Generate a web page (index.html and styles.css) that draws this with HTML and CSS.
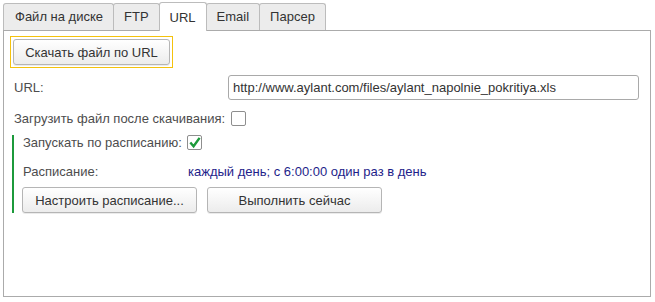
FILE: index.html
```html
<!DOCTYPE html>
<html lang="ru">
<head>
  <meta charset="UTF-8">
  <title>Загрузка файла</title>
  <link rel="stylesheet" href="styles.css">
</head>
<body>
  <div class="form">
    <div class="tabs">
      <div class="tab">Файл на диске</div>
      <div class="tab">FTP</div>
      <div class="tab active">URL</div>
      <div class="tab">Email</div>
      <div class="tab">Парсер</div>
    </div>

    <div class="panel">
      <div class="focus-frame">
        <button class="btn btn-download">Скачать файл по URL</button>
      </div>

      <div class="row row-url">
        <span class="label">URL:</span>
        <input class="field" type="text" value="http://www.aylant.com/files/aylant_napolnie_pokritiya.xls">
      </div>

      <div class="row row-check">
        <span class="label label-auto">Загрузить файл после скачивания:</span>
        <span class="checkbox"></span>
      </div>

      <div class="group">
        <div class="row row-check">
          <span class="label label-auto">Запускать по расписанию:</span>
          <span class="checkbox checked">
            <svg width="14" height="14" viewBox="0 0 14 14"><path d="M2.5 6.5 L6 10.5 L12.5 1.5" fill="none" stroke="#1c9a3b" stroke-width="2.6"/></svg>
          </span>
        </div>
        <div class="row row-schedule">
          <span class="label label-group">Расписание:</span>
          <span class="schedule-value">каждый день; с 6:00:00 один раз в день</span>
        </div>
        <div class="row row-buttons">
          <button class="btn btn-wide">Настроить расписание...</button>
          <button class="btn btn-wide">Выполнить сейчас</button>
        </div>
      </div>
    </div>
  </div>
</body>
</html>
```

FILE: styles.css
```css
body {
  margin: 0;
  background: #ffffff;
  font-family: "Liberation Sans", Arial, sans-serif;
  font-size: 13px;
  color: #4d4d4d;
}

.form {
  padding: 3px 0 0 3px;
  width: 648px;
}

.tabs {
  display: flex;
  height: 27px;
  position: relative;
  z-index: 1;
}

.tab {
  box-sizing: border-box;
  height: 27px;
  padding: 0 10px;
  line-height: 26px;
  background: #ececec;
  border: 1px solid #bcbcbc;
  border-bottom: none;
  border-radius: 3px 3px 0 0;
  color: #333333;
  margin-right: -1px;
}

.tab:first-child {
  padding-left: 11px;
}

.tab.active {
  background: #ffffff;
  height: 29px;
  margin-top: -1px;
  line-height: 29px;
}

.panel {
  box-sizing: border-box;
  height: 267px;
  border: 1px solid #ababab;
  padding: 5px 10px 0 6px;
}

.focus-frame {
  display: inline-block;
  border: 1px solid #f4c20d;
  padding: 2px;
}

.btn {
  box-sizing: border-box;
  height: 26px;
  border: 1px solid #b5b5b5;
  border-radius: 3px;
  background: linear-gradient(#ffffff, #ececec);
  box-shadow: 0 1px 0 rgba(0, 0, 0, 0.08);
  font-family: "Liberation Sans", Arial, sans-serif;
  font-size: 13px;
  color: #333333;
  padding: 0;
}

.btn-download {
  display: block;
  width: 157px;
}

.row {
  display: flex;
  align-items: center;
}

.label {
  flex: none;
  padding-left: 4px;
}

.row-url {
  margin-top: 7px;
  height: 25px;
}

.row-url .label {
  width: 214px;
}

.field {
  box-sizing: border-box;
  width: 411px;
  height: 25px;
  border: 1px solid #a9a9a9;
  border-radius: 3px;
  padding: 0 4px;
  font-family: "Liberation Sans", Arial, sans-serif;
  font-size: 13px;
  color: #333333;
}

.row-check {
  height: 15px;
  margin-top: 11px;
}

.label-auto {
  margin-right: 6px;
}

.checkbox {
  box-sizing: border-box;
  width: 15px;
  height: 15px;
  border: 1px solid #8e8e8e;
  border-radius: 2px;
  background: #ffffff;
  display: flex;
  align-items: center;
  justify-content: center;
}

.group {
  margin: 9px 0 0 2px;
  border-left: 2px solid #1c9a3b;
  padding-left: 8px;
}

.group .row-check {
  margin-top: 0;
  height: 15px;
}

.group .label {
  padding-left: 1px;
}

.group .label-auto {
  margin-right: 5px;
}

.row-schedule {
  margin-top: 13px;
  height: 16px;
}

.label-group {
  width: 165px;
}

.schedule-value {
  color: #1e1e8a;
  white-space: nowrap;
}

.row-buttons {
  margin-top: 8px;
  gap: 10px;
}

.btn-wide {
  width: 175px;
}
```
